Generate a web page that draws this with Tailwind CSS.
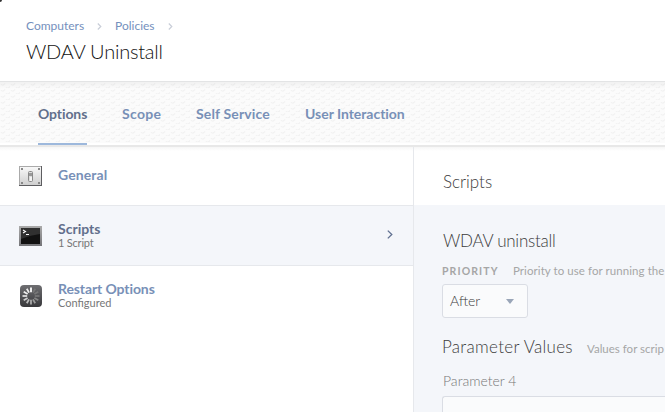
<!DOCTYPE html>
<html lang="en">
<head>
<meta charset="utf-8">
<title>WDAV Uninstall</title>
<script src="https://cdn.jsdelivr.net/npm/@tailwindcss/browser@4"></script>
</head>
<body class="w-[665px] h-[412px] overflow-hidden bg-white font-['Lato',sans-serif] whitespace-nowrap">
<div class="flex flex-col h-[412px] overflow-hidden">
  <header class="relative h-[81px] shrink-0 pl-[26px] pt-[16px]">
    <span class="absolute left-0 top-0 size-[2px] rounded-br-full bg-[#333]"></span>
    <nav class="flex h-5 items-center text-[12px] leading-5 text-[#7590bd]">
      <a class="w-[71px]">Computers</a>
      <svg class="w-[5px] h-[7px] mr-[13px]" viewBox="0 0 5 7" fill="none" stroke="#c9ced8" stroke-width="1.2"><path d="M.8.5 3.8 3.5.8 6.5"/></svg>
      <a class="w-[53px]">Policies</a>
      <svg class="w-[5px] h-[7px]" viewBox="0 0 5 7" fill="none" stroke="#c9ced8" stroke-width="1.2"><path d="M.8.5 3.8 3.5.8 6.5"/></svg>
    </nav>
    <h1 class="mt-[2px] text-[20px] font-light leading-[26px] tracking-[-0.22px] text-[#111]">WDAV Uninstall</h1>
  </header>
  <div class="relative h-[64px] shrink-0 border-t border-[#e3e4e5] bg-white">
    <svg class="absolute inset-x-0 top-0 w-full h-[61px]">
      <defs>
        <pattern id="dots" width="10" height="6" patternUnits="userSpaceOnUse">
          <rect width="10" height="6" fill="#fbfbfb"/>
          <path d="M1 2.2a2 1.6 0 0 0 3.6-.7v.8A2 1.8 0 0 1 1 2.2M6 5.2a2 1.6 0 0 0 3.6-.7v.8A2 1.8 0 0 1 6 5.2" fill="#efefef" stroke="#f1f1f1" stroke-width=".6"/>
        </pattern>
        <linearGradient id="fade" x2="0" y2="1"><stop stop-color="#000" stop-opacity=".04"/><stop offset="1" stop-color="#000" stop-opacity="0"/></linearGradient>
      </defs>
      <rect width="100%" height="61" fill="url(#dots)"/>
      <rect width="100%" height="7" fill="url(#fade)"/>
    </svg>
    <nav class="relative flex h-[63px] pl-[38px] text-[14px] font-bold leading-[64px] text-[#7890b7]">
      <a class="mr-[35px] h-[63px] w-[49px] border-b-2 border-[#9db8dc] tracking-[-0.1px] text-[#626f8c]">Options</a>
      <a class="w-[74px] tracking-[0.3px]">Scope</a>
      <a class="w-[109px] tracking-[0.15px]">Self Service</a>
      <a class="tracking-[-0.03px]">User Interaction</a>
    </nav>
  </div>
  <main class="flex flex-1 min-h-0 border-t-2 border-[#e8e8e8] bg-linear-to-b from-[#f6f6f6] from-0% to-white to-[4px]">
    <aside class="w-[414px] shrink-0 border-r border-[#e6e8ec] text-[14px] font-bold text-[#7890b7]">
      <div class="flex h-[59px] items-center border-b border-[#e6e8ec] pl-[19px]">
        <svg class="w-[23px] h-[20px] mr-4" viewBox="0 0 23 20">
          <defs><linearGradient id="plate" x2="0" y2="1"><stop stop-color="#f8f8f8"/><stop offset="1" stop-color="#cfcfcf"/></linearGradient></defs>
          <rect width="23" height="20" fill="#5d5d60"/><path d="M0 0h22v1H1v18H0z" fill="#aaa"/><rect x="1" y="1" width="21" height="18" fill="url(#plate)"/>
          <path d="M2 2h2v2H2zM19 2h2v2h-2zM2 16h2v2H2zM19 16h2v2h-2z" fill="#888"/>
          <rect x="9.5" y="5.5" width="4" height="10" rx="1" fill="#ddd" stroke="#888"/><path d="M10 7h3v3h-3z" fill="#999"/><path d="M11 11h2v4h-2z" fill="#f4f4f4"/>
        </svg>
        <span class="mb-[3px] tracking-[0.1px]">General</span>
      </div>
      <div class="flex h-[60px] items-center border-b border-[#e6e8ec] bg-[#f4f6fa] pl-[19px]">
        <svg class="w-[23px] h-[20px] mt-px mr-4" viewBox="0 0 23 20">
          <defs><linearGradient id="bezel" x2="0" y2="1"><stop stop-color="#aaa"/><stop offset="1" stop-color="#747478"/></linearGradient></defs>
          <rect width="23" height="20" fill="url(#bezel)"/><rect x="2" y="2" width="19" height="16" fill="#111"/><path d="M2 2h19v6Q12 9 2 13z" fill="#303030"/>
          <path d="m4 4 2.5 1.5L4 7" fill="none" stroke="#fff" stroke-width="1.1"/><path d="M7 8h3v1H7z" fill="#fff"/>
        </svg>
        <div class="mb-[2px] w-[329px]"><p class="leading-[16px] text-[#626f8c]">Scripts</p><p class="text-[11px] font-normal leading-[12px] tracking-[-0.2px] text-[#777]">1 Script</p></div>
        <svg class="w-[6px] h-[9px] mb-[3px]" viewBox="0 0 6 9" fill="none" stroke="#5f6f90" stroke-width="1.3"><path d="m.8.6 4 3.9-4 3.9"/></svg>
      </div>
      <div class="flex h-[60px] items-center pl-5">
        <svg class="size-[22px] mr-4" viewBox="0 0 22 22">
          <defs><linearGradient id="gear" x2="0" y2="1"><stop stop-color="#6e6e71"/><stop offset="1" stop-color="#38383b"/></linearGradient></defs>
          <rect width="22" height="22" rx="4" fill="url(#gear)"/>
          <g stroke-width="1.8"><path stroke="#fff" d="M11 2.5v4.7"/><path stroke="#777" d="m15.2 3.7-2.2 3.9M18.3 6.8l-3.9 2.2"/><path stroke="#777" d="M19.5 11h-4.7"/><path stroke="#858585" d="m18.3 15.2-3.9-2.2"/><path stroke="#999" d="m15.2 18.3-2.2-3.9"/><path stroke="#aaa" d="M11 19.5v-4.7"/><path stroke="#bbb" d="m6.8 18.3 2.2-3.9"/><path stroke="#ccc" d="m3.7 15.2 3.9-2.2"/><path stroke="#ddd" d="M2.5 11h4.7"/><path stroke="#eee" d="m3.7 6.8 3.9 2.2M6.8 3.7l2.2 3.9"/></g>
        </svg>
        <div class="mb-[2px]"><p class="leading-[16px] tracking-[-0.1px]">Restart Options</p><p class="text-[11px] font-normal leading-[12px] text-[#777]">Configured</p></div>
      </div>
    </aside>
    <section class="flex flex-1 min-w-0 flex-col overflow-hidden text-[#3c3c3c]">
      <h2 class="h-[58px] shrink-0 pl-[29px] pt-[23px] text-[17px] font-light leading-6">Scripts</h2>
      <div class="flex-1 bg-[#f4f6fa] pl-7 pt-[24px]">
        <h3 class="pl-px text-[17px] font-light leading-6 tracking-[-0.25px]">WDAV uninstall</h3>
        <p class="mt-[8px] flex leading-[20px] text-[#a6a6a6]"><b class="w-[71px] shrink-0 text-[10.5px] tracking-[1.1px]">PRIORITY</b><span class="text-[11.5px] tracking-[0.07px]">Priority to use for running the</span></p>
        <div class="mt-[3px] flex h-[34px] w-[86px] items-center rounded-[3px] border border-[#dadde4] bg-[#fafbfc] pl-[7px]"><span class="mb-[2px] w-[56px] text-[14px] font-light">After</span><svg class="w-2 h-[5px]" viewBox="0 0 8 5"><path d="M0 0h8L4 5z" fill="#9aa6b8"/></svg></div>
        <h3 class="mt-[17px] flex items-baseline text-[17px] font-light leading-6"><span class="w-[145px] shrink-0 tracking-[0.3px]">Parameter Values</span><span class="text-[11.5px] font-normal leading-5 text-[#a6a6a6]">Values for scrip</span></h3>
        <p class="mt-[12px] pl-px text-[14px] font-light leading-5 text-[#777]">Parameter 4</p>
        <div class="mt-[5px] h-[20px] rounded-tl-[3px] border-t border-l border-[#dadde4] bg-[#fafbfc]"></div>
      </div>
    </section>
  </main>
</div>
</body>
</html>
